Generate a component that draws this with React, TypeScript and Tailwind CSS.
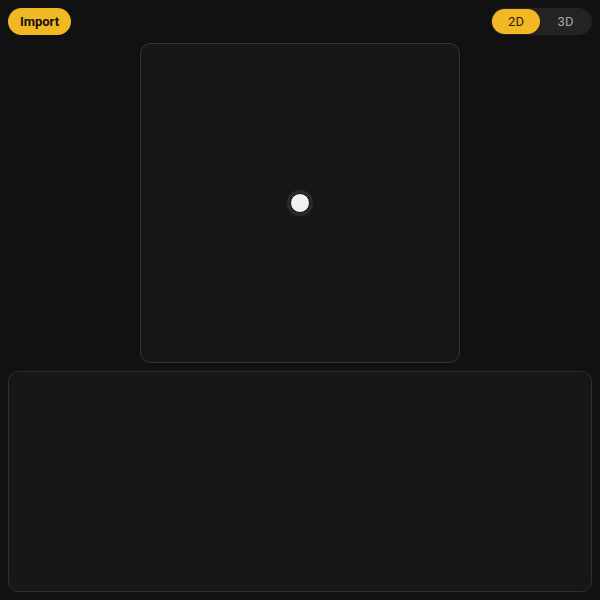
import React, { useState } from "react";

const App = () => {
  const [mode, setMode] = useState<"2D" | "3D">("2D");
  return (
    <div
      className="w-[600px] h-[600px] bg-[#111111] flex flex-col p-2 gap-2 overflow-hidden"
      style={{ fontFamily: "Roboto, 'Liberation Sans', sans-serif" }}
    >
      <div className="flex items-center justify-between h-[27px]">
        <button className="h-[27px] w-[63px] rounded-full bg-[#f2b824] text-[#111111] text-[13px] font-bold leading-none">
          Import
        </button>
        <div className="flex items-center h-[27px] w-[101px] rounded-full bg-[#232323] p-px">
          {(["2D", "3D"] as const).map((m) => (
            <button
              key={m}
              onClick={() => setMode(m)}
              className={
                mode === m
                  ? "h-[25px] w-[48px] rounded-full bg-[#f2b824] text-[#2a2206] text-[13px] leading-none"
                  : "h-[25px] flex-1 rounded-full text-[#a8a8a8] text-[13px] leading-none"
              }
            >
              {m}
            </button>
          ))}
        </div>
      </div>
      <div className="flex justify-center">
        <div className="w-[320px] h-[320px] rounded-[10px] border border-[#333333] bg-[#171717] flex items-center justify-center">
          <div className="w-[26px] h-[26px] rounded-full bg-[#2a2a2a] flex items-center justify-center">
            <div className="w-[20px] h-[20px] rounded-full bg-[#f0f0f0] border border-[#0c0c0c]" />
          </div>
        </div>
      </div>
      <div className="flex-1 rounded-[10px] border border-[#2e2e2e] bg-[#171717]" />
    </div>
  );
};

export default App;
